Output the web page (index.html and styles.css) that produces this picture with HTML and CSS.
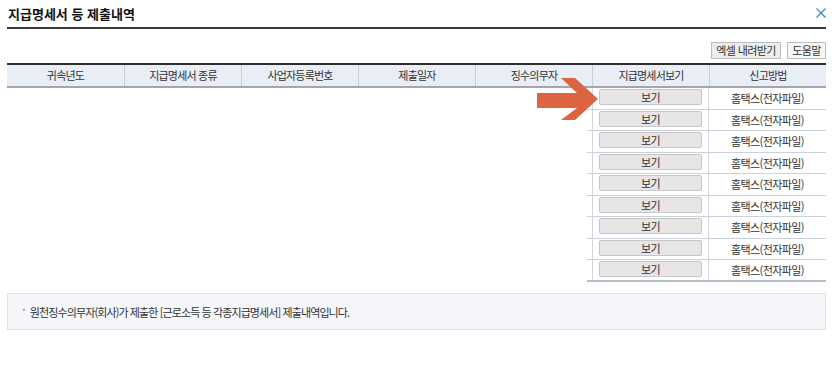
FILE: index.html
```html
<!DOCTYPE html>
<html lang="ko">
<head>
<meta charset="utf-8">
<title>지급명세서 등 제출내역</title>
<link rel="stylesheet" href="styles.css">
</head>
<body>
<div class="wrap">
  <div class="titlebar">
    <h1 class="title">지급명세서 등 제출내역</h1>
    <svg class="close" width="10" height="10" viewBox="0 0 10 10"><path d="M0.5 0.5 L9.5 9.5 M9.5 0.5 L0.5 9.5" stroke="#3f86d6" stroke-width="1.3" fill="none"/></svg>
  </div>
  <div class="toolbar">
    <button class="tbtn excel">엑셀 내려받기</button>
    <button class="tbtn help">도움말</button>
  </div>
  <div class="table">
    <div class="thead">
      <div class="th">귀속년도</div>
      <div class="th">지급명세서 종류</div>
      <div class="th">사업자등록번호</div>
      <div class="th">제출일자</div>
      <div class="th">징수의무자</div>
      <div class="th">지급명세서보기</div>
      <div class="th">신고방법</div>
    </div>
    <div class="tbody">
      <div class="tr"><div class="stub"></div><div class="td view"><button class="vbtn">보기</button></div><div class="td">홈택스(전자파일)</div></div>
      <div class="tr"><div class="stub"></div><div class="td view"><button class="vbtn">보기</button></div><div class="td">홈택스(전자파일)</div></div>
      <div class="tr"><div class="stub"></div><div class="td view"><button class="vbtn">보기</button></div><div class="td">홈택스(전자파일)</div></div>
      <div class="tr"><div class="stub"></div><div class="td view"><button class="vbtn">보기</button></div><div class="td">홈택스(전자파일)</div></div>
      <div class="tr"><div class="stub"></div><div class="td view"><button class="vbtn">보기</button></div><div class="td">홈택스(전자파일)</div></div>
      <div class="tr"><div class="stub"></div><div class="td view"><button class="vbtn">보기</button></div><div class="td">홈택스(전자파일)</div></div>
      <div class="tr"><div class="stub"></div><div class="td view"><button class="vbtn">보기</button></div><div class="td">홈택스(전자파일)</div></div>
      <div class="tr"><div class="stub"></div><div class="td view"><button class="vbtn">보기</button></div><div class="td">홈택스(전자파일)</div></div>
      <div class="tr last"><div class="stub"></div><div class="td view"><button class="vbtn">보기</button></div><div class="td">홈택스(전자파일)</div></div>
    </div>
    <svg class="arrow" width="64" height="44" viewBox="0 0 64 44"><polygon points="0,15 40,15 24,0 38,0 61,21 38,42 24,42 40,30 0,30" fill="#dc6441"/></svg>
  </div>
  <div class="note"><span class="bullet">*</span>원천징수의무자(회사)가 제출한 [근로소득 등 각종지급명세서] 제출내역입니다.</div>
</div>
</body>
</html>
```

FILE: styles.css
```css
html, body {
  margin: 0;
  padding: 0;
  background: #ffffff;
}
body {
  font-family: "Noto Sans CJK KR", "Noto Sans", sans-serif;
  color: #333333;
}
.wrap {
  padding: 0 14px 0 7px;
}
.titlebar {
  height: 27px;
  box-sizing: content-box;
  border-bottom: 2px solid #3a3a3a;
  display: flex;
  justify-content: space-between;
  align-items: flex-start;
}
.title {
  margin: 0;
  padding: 6px 0 0 1px;
  font-size: 13px;
  line-height: 16px;
  font-weight: bold;
  color: #111111;
}
.close {
  margin-top: 8px;
  display: block;
}
.toolbar {
  display: flex;
  justify-content: flex-end;
  gap: 6px;
  margin-top: 13px;
}
.tbtn {
  height: 17px;
  padding: 0;
  white-space: nowrap;
  font-family: inherit;
  font-size: 11px;
  line-height: 15px;
  letter-spacing: -0.6px;
  color: #333333;
  border: 1px solid #bdbdbd;
  background: #ececec;
  border-radius: 0;
}
.tbtn.excel { width: 70px; }
.tbtn.help { width: 39px; background: #f7f7f7; }
.table {
  position: relative;
  margin-top: 4px;
}
.thead {
  display: grid;
  grid-template-columns: repeat(7, 1fr);
  border-top: 2px solid #2e2e2e;
  border-bottom: 2px solid #a3a6aa;
  background: #e8edf6;
}
.th {
  height: 21px;
  line-height: 21px;
  text-align: center;
  font-size: 11px;
  letter-spacing: -0.8px;
  color: #333333;
  border-left: 1px solid #c8ced8;
}
.th:first-child { border-left: none; }
.tbody {
  margin-left: 580px;
}
.tr {
  display: flex;
  height: 21.5px;
  box-sizing: border-box;
  border-bottom: 1px solid #cad1dc;
}
.tr.last {
  border-bottom: 2px solid #b9bfc8;
  height: 22px;
}
.stub {
  width: 5px;
  border-right: 1px solid #d3d8e0;
}
.td {
  width: 117px;
  font-size: 11px;
  letter-spacing: -0.6px;
  line-height: 20px;
  text-align: center;
  color: #333333;
}
.td.view {
  width: 116px;
  border-right: 1px solid #d3d8e0;
  text-align: left;
  padding: 1px 0 0 6px;
  box-sizing: border-box;
}
.vbtn {
  display: block;
  width: 103px;
  height: 16px;
  padding: 0;
  font-family: inherit;
  font-size: 11px;
  line-height: 14px;
  letter-spacing: -0.5px;
  color: #333333;
  background: #e7e5e5;
  border: 1px solid #c6c6c6;
  border-radius: 2px;
}
.arrow {
  position: absolute;
  left: 530px;
  top: 15px;
}
.note {
  margin-top: 11px;
  height: 37px;
  box-sizing: border-box;
  background: #f4f6fa;
  border: 1px solid #dde2ea;
  padding-left: 14px;
  font-size: 11px;
  line-height: 35px;
  letter-spacing: -0.9px;
  color: #333333;
}
.bullet {
  font-size: 8px;
  color: #888888;
  margin-right: 5px;
  vertical-align: 2px;
}
```
